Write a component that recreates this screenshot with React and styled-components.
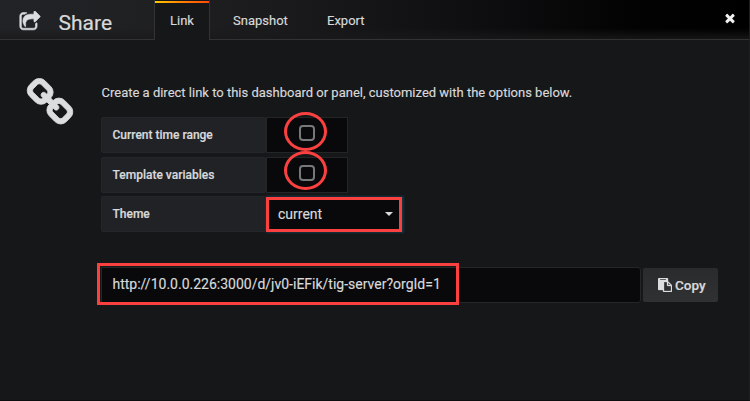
import React from 'react';
import styled, { createGlobalStyle } from 'styled-components';

const GlobalStyle = createGlobalStyle`
  * {
    box-sizing: border-box;
  }

  body {
    margin: 0;
    background: #161719;
    color: #d8d9da;
    font-family: Roboto, sans-serif;
    font-size: 13px;
    -webkit-text-stroke: 0.15px;
  }
`;

const Modal = styled.div`
  width: 750px;
  height: 401px;
  overflow: hidden;
  background: #161719;
  border-right: 1px solid #1c1e20;
  border-bottom: 1px solid #0c0d0e;
`;

const Header = styled.header`
  display: flex;
  height: 40px;
  background:
    linear-gradient(180deg, rgba(22, 23, 25, 0) 70%, rgba(25, 25, 26, 0.9) 100%),
    linear-gradient(90deg, #222326 0, #1f2022 150px, #19191b 300px, #0e0e10 480px, #020202 640px, #000 100%);
`;

const Title = styled.h2`
  display: flex;
  align-items: center;
  width: 154px;
  margin: 0;
  padding: 7px 0 0 19px;
  border-bottom: 1px solid #333335;
  font-size: 21px;
  font-weight: 400;
  line-height: 30px;
  -webkit-text-stroke: 0.2px;

  svg {
    margin: -3px 17.5px 0 0;
  }
`;

const Tabs = styled.nav`
  display: flex;
  flex: 1;
`;

const Tab = styled.a`
  width: ${props => props.$width}px;
  padding: 11px 0 0 ${props => props.$indent || 0}px;
  line-height: 20px;
  border-bottom: 1px solid #333335;
`;

const ActiveTab = styled(Tab)`
  display: flex;
  flex-direction: column;
  padding: 1px 0 0;
  border: 1px solid #333335;
  border-width: 0 1px;
  background: #161719;

  &::before {
    content: '';
    height: 2px;
    background: linear-gradient(90deg, #ffc800, #ff7a00 55%, #ff4a0a);
  }

  span {
    padding: 8px 0 0 15px;
  }
`;

const CloseButton = styled.a`
  display: flex;
  flex: 1;
  justify-content: flex-end;
  padding: 11px 12px 0 0;
  border-bottom: 1px solid #333335;
`;

const Body = styled.div`
  display: flex;
  padding: 37px 31px 0 26px;
`;

const Content = styled.div`
  flex: 1;
  padding-left: 27px;
`;

const LinkIcon = styled.div`
  width: 48px;
  height: 50px;

  svg {
    margin: 1px 0 0 -1px;
  }
`;

const Intro = styled.p`
  margin: 6px 0 14px;
  padding-left: 0.5px;
  line-height: 20px;
  white-space: nowrap;
`;

const Options = styled.div`
  display: grid;
`;

const Row = styled.div`
  display: flex;
  height: 36px;
  margin-bottom: ${props => props.$gap || 0}px;
`;

const Label = styled.label`
  width: 165px;
  padding-left: 10.5px;
  border: 1px solid #252629;
  border-radius: 2px;
  background: #212226;
  font-size: 12px;
  font-weight: 500;
  line-height: 34px;
  -webkit-text-stroke: 0.2px;
`;

const Cell = styled.div`
  position: relative;
  display: flex;
  align-items: center;
  justify-content: center;
  width: 82px;
  border: 1px solid #242527;
  background: #09090b;
`;

const Checkbox = styled.span`
  width: 16px;
  height: 16px;
  margin-top: -4px;
  border: 2px solid #77787a;
  border-radius: 4px;
`;

// red marker ring drawn over a checkbox
const Ring = styled.span`
  position: absolute;
  left: 17px;
  top: ${props => props.$top}px;
  width: 43px;
  height: 39px;
  border: 3px solid #fb4040;
  border-radius: 50%;
`;

const Select = styled.div`
  display: flex;
  align-items: center;
  justify-content: space-between;
  width: 136px;
  height: 35px;
  margin-top: 1px;
  padding: 0 6px 1px 9px;
  border: 3px solid #fb4040;
  background: #09090b;
  box-shadow: 1px 0 2px 1px #183443;
  font-size: 14px;
`;

const Caret = styled.span`
  border: solid transparent;
  border-width: 4px 4px 0;
  border-top-color: #d8d9da;
`;

const UrlRow = styled.div`
  display: flex;
  gap: 2px;
  margin-top: 35px;
`;

const UrlInput = styled.div`
  position: relative;
  width: 540px;
  height: 36px;
  padding-left: 10.5px;
  border: 1px solid #252628;
  border-radius: 0 3px 3px 0;
  background: #09090b;
  font-size: 14px;
  line-height: 33px;
`;

const UrlMarker = styled.span`
  position: absolute;
  left: -5px;
  top: -5px;
  width: 362px;
  height: 42px;
  border: 3px solid #fb4040;
`;

const CopyButton = styled.button`
  display: flex;
  align-items: center;
  gap: 3px;
  width: 75px;
  height: 34px;
  margin-top: 1px;
  padding: 0 0 0 15px;
  border: 0;
  border-radius: 2px;
  background: linear-gradient(180deg, #2a2b2d, #303133);
  color: #d8d9da;
  font: 500 13.5px Roboto, sans-serif;
  -webkit-text-stroke: 0.2px;
`;

const Icon = ({ size, d, color = '#dcddde', weight = 0 }) => (
  <svg width={size} height={size} viewBox="0 0 1792 1792" fill={color} stroke={color} strokeWidth={weight}>
    <path d={d} />
  </svg>
);

const share = 'M1472 989v259q0 119-84.5 203.5t-203.5 84.5h-832q-119 0-203.5-84.5t-84.5-203.5v-832q0-119 84.5-203.5t203.5-84.5h255q13 0 22.5 9.5t9.5 22.5q0 27-26 32-77 26-133 60-10 4-16 4h-112q-66 0-113 47t-47 113v832q0 66 47 113t113 47h832q66 0 113-47t47-113v-214q0-19 18-29 28-13 54-37 16-16 35-8 21 9 21 29zm237-496l-384 384q-18 19-45 19-12 0-25-5-39-17-39-59v-192h-160q-323 0-438 131-119 137-74 473 3 23-20 34-8 2-12 2-16 0-26-13-10-14-21-31t-39.5-68.5-49.5-99.5-38.5-114-17.5-122q0-49 3.5-91t14-90 28-88 47-81.5 68.5-74 94.5-61.5 124.5-48.5 159.5-30.5 196.5-11h160v-192q0-42 39-59 13-5 25-5 26 0 45 19l384 384q19 19 19 45t-19 45z';
const link = 'M1520 1216q0-40-28-68l-208-208q-28-28-68-28-42 0-72 32 3 3 19 18.5t21.5 21.5 15 19 13 25.5 3.5 27.5q0 40-28 68t-68 28q-15 0-27.5-3.5t-25.5-13-19-15-21.5-21.5-18.5-19q-33 31-33 73 0 40 28 68l206 207q27 27 68 27 40 0 68-26l147-146q28-28 28-67zm-703-705q0-40-28-68l-206-207q-28-28-68-28-39 0-68 27l-147 146q-28 28-28 67 0 40 28 68l208 208q27 27 68 27 42 0 72-31-3-3-19-18.5t-21.5-21.5-15-19-13-25.5-3.5-27.5q0-40 28-68t68-28q15 0 27.5 3.5t25.5 13 19 15 21.5 21.5 18.5 19q33-31 33-73zm895 705q0 120-85 203l-147 146q-83 83-203 83-121 0-204-85l-206-207q-83-83-83-203 0-123 88-209l-88-88q-86 88-208 88-120 0-204-84l-208-208q-84-84-84-204t85-203l147-146q83-83 203-83 121 0 204 85l206 207q83 83 83 203 0 123-88 209l88 88q86-88 208-88 120 0 204 84l208 208q84 84 84 204z';
const times = 'M1490 1322q0 40-28 68l-136 136q-28 28-68 28t-68-28l-294-294-294 294q-28 28-68 28t-68-28l-136-136q-28-28-28-68t28-68l294-294-294-294q-28-28-28-68t28-68l136-136q28-28 68-28t68 28l294 294 294-294q28-28 68-28t68 28l136 136q28 28 28 68t-28 68l-294 294 294 294q28 28 28 68z';
const clipboard = 'M768 1664h896v-640h-416q-40 0-68-28t-28-68v-416h-384v1152zm256-1440v-64q0-13-9.5-22.5t-22.5-9.5h-704q-13 0-22.5 9.5t-9.5 22.5v64q0 13 9.5 22.5t22.5 9.5h704q13 0 22.5-9.5t9.5-22.5zm256 672h299l-299-299v299zm512 128v672q0 40-28 68t-68 28h-960q-40 0-68-28t-28-68v-160h-544q-40 0-68-28t-28-68v-1344q0-40 28-68t68-28h1088q40 0 68 28t28 68v328q21 13 36 28l408 408q28 28 48 76t20 88z';

function App() {
  return (
    <Modal>
      <GlobalStyle />
      <Header>
        <Title>
          <Icon size={22} d={share} weight={50} />
          Share
        </Title>
        <Tabs>
          <ActiveTab $width={56}><span>Link</span></ActiveTab>
          <Tab $width={94} $indent={23}>Snapshot</Tab>
          <Tab $width={84} $indent={23}>Export</Tab>
          <CloseButton>
            <Icon size={14} d={times} color="#f0f0f0" />
          </CloseButton>
        </Tabs>
      </Header>
      <Body>
        <LinkIcon>
          <Icon size={50} d={link} weight={30} />
        </LinkIcon>
        <Content>
          <Intro>Create a direct link to this dashboard or panel, customized with the options below.</Intro>
          <Options>
            <Row $gap={4}>
              <Label>Current time range</Label>
              <Cell>
                <Checkbox />
                <Ring $top={-6} />
              </Cell>
            </Row>
            <Row $gap={3}>
              <Label>Template variables</Label>
              <Cell>
                <Checkbox />
                <Ring $top={-7} />
              </Cell>
            </Row>
            <Row>
              <Label>Theme</Label>
              <Select>
                current
                <Caret />
              </Select>
            </Row>
          </Options>
          <UrlRow>
            <UrlInput>
              http://10.0.0.226:3000/d/jv0-iEFik/tig-server?orgId=1
              <UrlMarker />
            </UrlInput>
            <CopyButton>
              <Icon size={14} d={clipboard} weight={40} />
              Copy
            </CopyButton>
          </UrlRow>
        </Content>
      </Body>
    </Modal>
  );
}

export default App;
